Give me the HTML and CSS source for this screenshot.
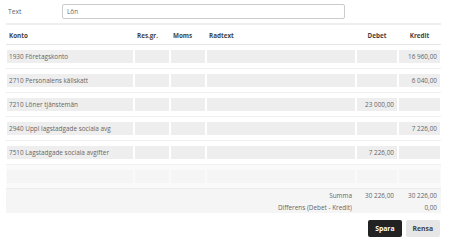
FILE: index.html
```html
<!DOCTYPE html>
<html>
  <head>
    <meta name="viewport" content="width=device-width, initial-scale=1" />
    <link rel="stylesheet" href="styles.css">
  </head>

  <body>
    <div class="page">
      <div class="text-row">
        <label for="text" class="text-label">Text</label>
        <input type="text" id="text" class="text-input" value="Lön" />
      </div>

      <table class="ver-table">
        <colgroup>
          <col class="c-konto" />
          <col class="c-res" />
          <col class="c-moms" />
          <col class="c-rad" />
          <col class="c-deb" />
          <col class="c-kred" />
        </colgroup>
        <thead>
          <tr>
            <th>Konto</th>
            <th>Res.gr.</th>
            <th>Moms</th>
            <th>Radtext</th>
            <th class="num">Debet</th>
            <th class="num">Kredit</th>
          </tr>
        </thead>
        <tbody>
          <tr>
            <td><input class="cell" value="1930 Företagskonto" /></td>
            <td><input class="cell" /></td>
            <td><input class="cell" /></td>
            <td><input class="cell" /></td>
            <td><input class="cell num" /></td>
            <td><input class="cell num" value="16 960,00" /></td>
          </tr>
          <tr>
            <td><input class="cell" value="2710 Personalens källskatt" /></td>
            <td><input class="cell" /></td>
            <td><input class="cell" /></td>
            <td><input class="cell" /></td>
            <td><input class="cell num" /></td>
            <td><input class="cell num" value="6 040,00" /></td>
          </tr>
          <tr>
            <td><input class="cell" value="7210 Löner tjänstemän" /></td>
            <td><input class="cell" /></td>
            <td><input class="cell" /></td>
            <td><input class="cell" /></td>
            <td><input class="cell num" value="23 000,00" /></td>
            <td><input class="cell num" /></td>
          </tr>
          <tr>
            <td><input class="cell" value="2940 Uppl lagstadgade sociala avg" /></td>
            <td><input class="cell" /></td>
            <td><input class="cell" /></td>
            <td><input class="cell" /></td>
            <td><input class="cell num" /></td>
            <td><input class="cell num" value="7 226,00" /></td>
          </tr>
          <tr>
            <td><input class="cell" value="7510 Lagstadgade sociala avgifter" /></td>
            <td><input class="cell" /></td>
            <td><input class="cell" /></td>
            <td><input class="cell" /></td>
            <td><input class="cell num" value="7 226,00" /></td>
            <td><input class="cell num" /></td>
          </tr>
          <tr class="new-row">
            <td><input class="cell" /></td>
            <td><input class="cell" /></td>
            <td><input class="cell" /></td>
            <td><input class="cell" /></td>
            <td><input class="cell num" /></td>
            <td><input class="cell num" /></td>
          </tr>
        </tbody>
        <tfoot>
          <tr class="sum-first">
            <td colspan="4" class="num">Summa</td>
            <td class="num">30 226,00</td>
            <td class="num">30 226,00</td>
          </tr>
          <tr>
            <td colspan="4" class="num">Differens (Debet - Kredit)</td>
            <td class="num"></td>
            <td class="num">0,00</td>
          </tr>
        </tfoot>
      </table>

      <div class="actions">
        <button type="submit" class="btn btn-dark">Spara</button>
        <button type="reset" class="btn btn-light">Rensa</button>
      </div>
    </div>
  </body>
</html>
```

FILE: styles.css
```css
  body {
    margin: 0;
    font-family: "Open Sans", "DejaVu Sans", sans-serif;
    font-size: 6.4px;
    color: #666;
    background: #fff;
  }

  .page {
    width: 435px;
    padding: 4px 0 0 6px;
  }

  .text-row {
    display: flex;
    align-items: center;
    height: 19px;
    padding-left: 2px;
    border-bottom: 2px solid #eee;
  }

  .text-label {
    width: 54px;
    margin-top: -4px;
    font-size: 6.8px;
  }

  .text-input {
    width: 283px;
    height: 15px;
    margin-top: -4px;
    padding: 0 4px;
    box-sizing: border-box;
    border: 1px solid #ccc;
    border-radius: 2px;
    font: inherit;
    color: #666;
  }

  .ver-table {
    width: 435px;
    border-collapse: collapse;
    table-layout: fixed;
  }

  .c-konto { width: 128px; }
  .c-res { width: 36px; }
  .c-moms { width: 36px; }
  .c-rad { width: 150px; }
  .c-deb { width: 42px; }
  .c-kred { width: 43px; }

  .ver-table th {
    height: 15px;
    padding: 0 1px 4px 3px;
    vertical-align: bottom;
    text-align: left;
    font-size: 6.3px;
    font-weight: bold;
    color: #444;
    border-bottom: 1px solid #e6e6e6;
    white-space: nowrap;
  }

  .ver-table th.num {
    text-align: center;
    padding-left: 1px;
  }

  .ver-table tbody td {
    padding: 5px 1px;
    border-top: 1px solid #f0f0f0;
  }

  .ver-table tbody tr:first-child td {
    border-top: none;
  }

  .cell {
    display: block;
    width: 100%;
    height: 13px;
    padding: 0 3px 0 2px;
    box-sizing: border-box;
    border: none;
    background: #eee;
    font: inherit;
    color: #666;
  }

  .cell.num {
    text-align: right;
  }

  .new-row td {
    background: #fafafa;
  }

  .new-row .cell {
    background: #f5f5f5;
  }

  .ver-table tfoot td {
    background: #f5f5f5;
    height: 12px;
    padding: 0 4px 0 1px;
    color: #666;
    white-space: nowrap;
  }

  .ver-table tfoot .sum-first td {
    border-top: 1px solid #ececec;
  }

  .ver-table td.num {
    text-align: right;
  }

  .actions {
    display: flex;
    justify-content: flex-end;
    gap: 4px;
    padding: 7px 1px 0 0;
  }

  .btn {
    height: 17px;
    padding: 0 7px;
    border: none;
    border-radius: 2px;
    font: inherit;
    font-size: 6.8px;
    font-weight: bold;
    cursor: pointer;
  }

  .btn-dark {
    background-color: #222;
    color: #fff;
  }

  .btn-light {
    background-color: #e6e6e6;
    color: #444;
  }
```
